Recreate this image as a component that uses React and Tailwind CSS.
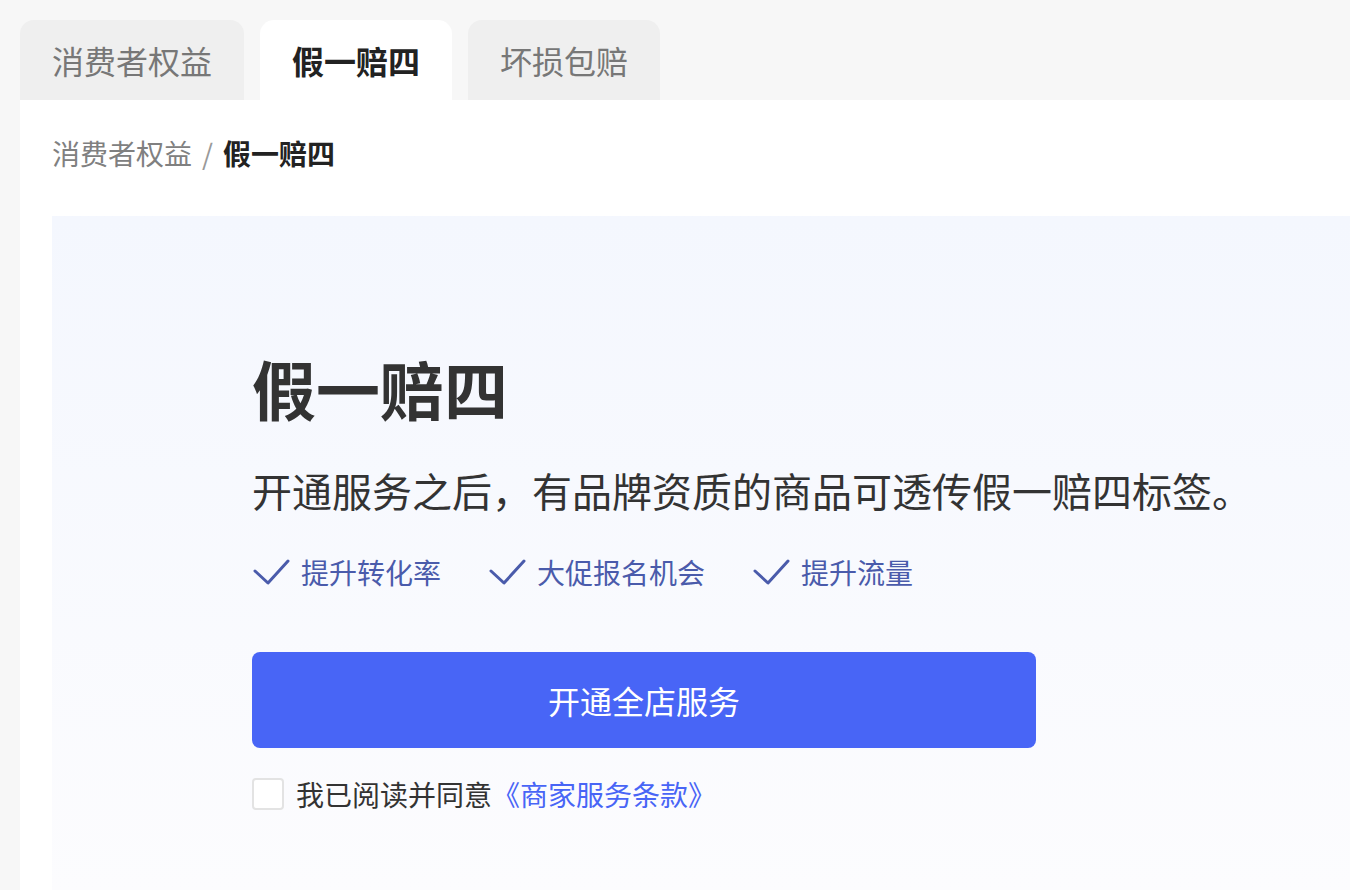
export default function App() {
  const font = { fontFamily: '"Noto Sans CJK SC", "Noto Sans", sans-serif' };
  const Check = () => (
    <svg width="38" height="26" viewBox="0 0 38 26" fill="none" className="shrink-0">
      <polyline points="3,12 16,24 36,2" stroke="#4a5bab" strokeWidth="3" strokeLinecap="round" strokeLinejoin="round" />
    </svg>
  );
  const features = ["提升转化率", "大促报名机会", "提升流量"];
  return (
    <div className="w-[1350px] h-[890px] overflow-hidden bg-[#f7f7f7] pl-5 pt-5 flex flex-col" style={font}>
      <div className="flex gap-4 h-[80px] shrink-0">
        <div className="h-full px-8 flex items-center rounded-t-[14px] bg-[#efefef] text-[32px] text-[#777]">消费者权益</div>
        <div className="h-full px-8 flex items-center rounded-t-[14px] bg-white text-[32px] text-[#222] font-bold">假一赔四</div>
        <div className="h-full px-8 flex items-center rounded-t-[14px] bg-[#efefef] text-[32px] text-[#777]">坏损包赔</div>
      </div>
      <div className="flex-1 bg-white pl-8 pt-[33px] flex flex-col">
        <div className="flex items-center h-[40px] text-[28px] leading-[40px]">
          <span className="text-[#808080]">消费者权益</span>
          <span className="mx-[10px] text-[#999]">/</span>
          <span className="text-[#222] font-bold">假一赔四</span>
        </div>
        <div className="mt-[43px] flex-1 bg-gradient-to-b from-[#f4f7fe] to-[#fcfcfe] pl-[200px] pt-[131px]">
          <div className="text-[64px] leading-[80px] font-bold text-[#333]">假一赔四</div>
          <div className="mt-[35px] text-[40px] leading-[56px] text-[#333] whitespace-nowrap">开通服务之后，有品牌资质的商品可透传假一赔四标签。</div>
          <div className="mt-[34px] flex items-center gap-[47px] h-[40px]">
            {features.map((f) => (
              <div key={f} className="flex items-center gap-[11px]">
                <Check />
                <span className="text-[28px] leading-[40px] text-[#4a5bab]">{f}</span>
              </div>
            ))}
          </div>
          <button className="mt-[60px] w-[784px] h-[96px] rounded-[8px] bg-[#4865f6] text-white text-[32px] flex items-center justify-center">开通全店服务</button>
          <div className="mt-[26px] flex items-center h-[40px]">
            <div className="w-[32px] h-[32px] rounded-[4px] border-2 border-[#e3e3e3] bg-white shrink-0"></div>
            <span className="ml-[12px] text-[28px] leading-[40px] text-[#333]">我已阅读并同意</span>
            <span className="text-[28px] leading-[40px] text-[#4865f6]">《商家服务条款》</span>
          </div>
        </div>
      </div>
    </div>
  );
}
